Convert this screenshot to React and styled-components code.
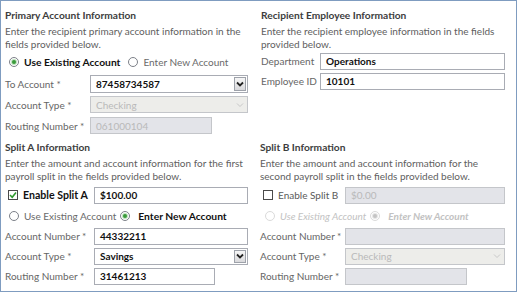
import React from 'react';
import styled, { createGlobalStyle, css } from 'styled-components';

const GlobalStyle = createGlobalStyle`
  html, body { margin: 0; padding: 0; background: #fff; }
  body { font-family: Lato, "Open Sans", sans-serif; }
  * { box-sizing: border-box; }
`;

const Frame = styled.div`
  width: 517px;
  height: 292px;
  border: 1px solid #7f9cc0;
  display: grid;
  grid-template-columns: 257px 1fr;
  grid-template-rows: 136px 1fr;
  background: #fff;
  font-size: 10px;
  color: #5e5e5e;
`;

const Section = styled.section`
  display: flex;
  flex-direction: column;
  padding: ${p => p.$top}px 0 0 ${p => p.$left}px;
`;

const Title = styled.h2`
  margin: 0;
  font-size: 10.2px;
  font-weight: 700;
  line-height: 14px;
  color: #3d3d3d;
  white-space: nowrap;
`;

const Desc = styled.p`
  margin: 3px 0 0;
  font-size: 10px;
  line-height: 13px;
  color: #606060;
  white-space: nowrap;
`;

const Row = styled.div`
  display: flex;
  align-items: center;
  height: ${p => p.$h || 21}px;
  margin-top: ${p => p.$mt || 0}px;
  padding-left: ${p => p.$pl || 0}px;
`;

const Label = styled.span`
  flex: none;
  width: ${p => p.$w}px;
  color: #666;
  font-size: 10px;
  white-space: nowrap;
`;

const Box = styled.div`
  flex: none;
  position: relative;
  display: flex;
  align-items: center;
  width: ${p => p.$w}px;
  height: ${p => p.$h || 18}px;
  padding-left: 5px;
  border: 1px solid ${p => (p.$disabled ? '#c4c6ca' : '#a9acb4')};
  background: ${p => (p.$disabled ? (p.$select ? '#ededea' : '#e3e4e9') : '#fff')};
  color: ${p => (p.$disabled ? '#b9b9b9' : '#111')};
  font-size: 10px;
  font-weight: ${p => (p.$disabled ? 400 : 700)};
  white-space: nowrap;
`;

const ArrowBtn = styled.span`
  position: absolute;
  right: 1px;
  top: 1px;
  bottom: 1px;
  width: 12px;
  display: flex;
  align-items: center;
  justify-content: center;
  ${p => !p.$disabled && css`
    border: 1px solid #9ea2aa;
    background: linear-gradient(#f6f6f6, #d9d9dc);
  `}
`;

const Chevron = ({ disabled }) => (
  <svg width="8" height="6" viewBox="0 0 8 6">
    <path d="M1 1.5 L4 4.5 L7 1.5" fill="none" stroke={disabled ? '#c8c8c8' : '#222'} strokeWidth={disabled ? 1 : 1.8} />
  </svg>
);

const Select = ({ w, h, disabled, children }) => (
  <Box $w={w} $h={h} $disabled={disabled} $select>
    {children}
    <ArrowBtn $disabled={disabled}><Chevron disabled={disabled} /></ArrowBtn>
  </Box>
);

const Option = styled.span`
  display: inline-flex;
  align-items: center;
  margin-right: ${p => p.$mr || 0}px;
  white-space: nowrap;
`;

const Circle = styled.span`
  flex: none;
  position: relative;
  width: 10px;
  height: 10px;
  border-radius: 50%;
  margin-right: ${p => p.$gap || 5}px;
  border: 1px solid ${p => (p.$disabled ? '#dadada' : '#7c8088')};
  background: #fff;
  ${p => p.$checked && css`
    &::after {
      content: '';
      position: absolute;
      left: 2px;
      top: 2px;
      width: 4px;
      height: 4px;
      border-radius: 50%;
      background: ${p.$disabled ? '#c4c4c4' : '#3a9a3a'};
      box-shadow: 0 0 0 1px ${p.$disabled ? '#e6e6e6' : '#bfe3bf'};
    }
  `}
`;

const OptText = styled.span`
  font-size: ${p => (p.$big ? 10.3 : 10)}px;
  font-weight: ${p => (p.$bold ? 700 : 400)};
  font-style: ${p => (p.$italic ? 'italic' : 'normal')};
  color: ${p => (p.$disabled ? '#c2c2c2' : p.$bold ? '#111' : '#6a6a6a')};
`;

const CheckBox = styled.span`
  flex: none;
  display: flex;
  align-items: center;
  justify-content: center;
  width: 10px;
  height: 10px;
  margin-left: 3px;
  margin-right: 5px;
  border: 1px solid #4a4a4a;
  background: #fff;
`;

const CheckLabel = styled.span`
  flex: none;
  width: ${p => p.$w}px;
  font-size: ${p => (p.$bold ? 10.6 : 10)}px;
  font-weight: ${p => (p.$bold ? 700 : 400)};
  color: ${p => (p.$bold ? '#111' : '#5a5a5a')};
  white-space: nowrap;
`;

const Tick = () => (
  <svg width="8" height="8" viewBox="0 0 8 8">
    <path d="M1 4 L3.2 6.2 L7 1.5" fill="none" stroke="#2f9a2f" strokeWidth="1.6" />
  </svg>
);

export default function App() {
  return (
    <>
      <GlobalStyle />
      <Frame>
        <Section $top={7} $left={4}>
          <Title>Primary Account Information</Title>
          <Desc>Enter the recipient primary account information in the<br />fields provided below.</Desc>
          <Row $h={22} $pl={4}>
            <Option $mr={8}>
              <Circle $checked />
              <OptText $bold $big>Use Existing Account</OptText>
            </Option>
            <Option>
              <Circle />
              <OptText>Enter New Account</OptText>
            </Option>
          </Row>
          <Row>
            <Label $w={85}>To Account *</Label>
            <Select w={158}>87458734587</Select>
          </Row>
          <Row>
            <Label $w={85}>Account Type *</Label>
            <Select w={158} h={17} disabled>Checking</Select>
          </Row>
          <Row>
            <Label $w={85}>Routing Number *</Label>
            <Box $w={122} $h={17} $disabled>061000104</Box>
          </Row>
        </Section>

        <Section $top={7} $left={3}>
          <Title>Recipient Employee Information</Title>
          <Desc>Enter the recipient employee information in the fields<br />provided below.</Desc>
          <Row $h={20}>
            <Label $w={59}>Department</Label>
            <Box $w={185} $h={17}>Operations</Box>
          </Row>
          <Row $h={20}>
            <Label $w={59}>Employee ID</Label>
            <Box $w={185} $h={17}>10101</Box>
          </Row>
        </Section>

        <Section $top={3} $left={4}>
          <Title>Split A Information</Title>
          <Desc>Enter the amount and account information for the first<br />payroll split in the fields provided below.</Desc>
          <Row $h={20} $mt={2}>
            <CheckBox><Tick /></CheckBox>
            <CheckLabel $w={71} $bold>Enable Split A</CheckLabel>
            <Box $w={154} $h={17}>$100.00</Box>
          </Row>
          <Row $h={20} $mt={1} $pl={4}>
            <Option $mr={4}>
              <Circle />
              <OptText>Use Existing Account</OptText>
            </Option>
            <Option>
              <Circle $checked $gap={8} />
              <OptText $bold $big>Enter New Account</OptText>
            </Option>
          </Row>
          <Row $h={20}>
            <Label $w={89}>Account Number *</Label>
            <Box $w={154} $h={17}>44332211</Box>
          </Row>
          <Row $h={20}>
            <Label $w={89}>Account Type *</Label>
            <Select w={154} h={17}>Savings</Select>
          </Row>
          <Row $h={20}>
            <Label $w={89}>Routing Number *</Label>
            <Box $w={121} $h={17}>31461213</Box>
          </Row>
        </Section>

        <Section $top={3} $left={2}>
          <Title>Split B Information</Title>
          <Desc>Enter the amount and account information for the<br />second payroll split in the fields provided below.</Desc>
          <Row $h={20} $mt={2}>
            <CheckBox />
            <CheckLabel $w={67}>Enable Split B</CheckLabel>
            <Box $w={160} $h={17} $disabled>$0.00</Box>
          </Row>
          <Row $h={20} $mt={1} $pl={5}>
            <Option $mr={4}>
              <Circle $disabled />
              <OptText $italic $disabled>Use Existing Account</OptText>
            </Option>
            <Option>
              <Circle $checked $disabled $gap={8} />
              <OptText $italic $bold $disabled>Enter New Account</OptText>
            </Option>
          </Row>
          <Row $h={20}>
            <Label $w={85}>Account Number *</Label>
            <Box $w={160} $h={17} $disabled />
          </Row>
          <Row $h={20}>
            <Label $w={85}>Account Type *</Label>
            <Select w={160} h={17} disabled>Checking</Select>
          </Row>
          <Row $h={20}>
            <Label $w={85}>Routing Number *</Label>
            <Box $w={122} $h={17} $disabled />
          </Row>
        </Section>
      </Frame>
    </>
  );
}
